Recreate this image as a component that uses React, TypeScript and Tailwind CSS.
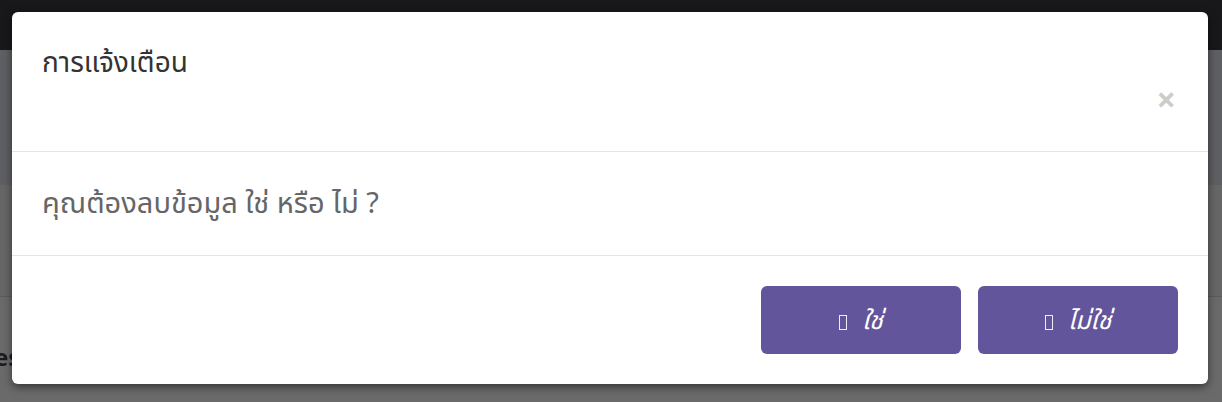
import React from "react";

const thai = { fontFamily: '"Noto Sans", "Noto Sans Thai", "Liberation Sans", sans-serif' };

function Tofu() {
  return <span className="inline-block w-[8px] h-[15px] border border-white/90 align-middle mr-[15px]" />;
}

export default function App() {
  return (
    <div className="relative w-full h-[402px] overflow-hidden bg-[#6b6b6b]" style={thai}>
      {/* page behind the overlay */}
      <div className="h-[50px] bg-[#18181b]" />
      <div className="h-[135px] bg-[#5e5f62]" />
      <div className="h-[112px] bg-[#666666] border-b border-[#5a5a5a]" />
      <div className="h-[105px] bg-[#6a6a6a] pt-[42px]">
        <span className="ml-[-6px] text-[24px] font-bold text-[#1c1c1c]">es</span>
      </div>

      {/* modal */}
      <div className="absolute inset-0 px-[12px] pt-[12px]">
        <div className="w-[1196px] bg-white rounded-[6px] shadow-[0_3px_9px_rgba(0,0,0,0.5)] overflow-hidden">
          <div className="flex justify-between h-[140px] border-b border-[#e5e5e5] pl-[30px] pr-[32px]">
            <h4 className="pt-[29px] text-[28px] leading-[40px] text-[#333]">การแจ้งเตือน</h4>
            <button className="self-start mt-[71px] text-[34px] leading-[32px] font-bold text-[#cccccc]">×</button>
          </div>
          <div className="h-[104px] border-b border-[#e5e5e5] pl-[30px] pt-[30px]">
            <p className="text-[29px] leading-[40px] text-[#666]">คุณต้องลบข้อมูล ใช่ หรือ ไม่ ?</p>
          </div>
          <div className="flex justify-end gap-[17px] pt-[30px] pb-[30px] pr-[30px]">
            <button className="w-[200px] h-[68px] rounded-[6px] bg-[#63559b] text-white italic text-[25px]">
              <Tofu />ใช่
            </button>
            <button className="w-[200px] h-[68px] rounded-[6px] bg-[#63559b] text-white italic text-[25px]">
              <Tofu />ไม่ใช่
            </button>
          </div>
        </div>
      </div>
    </div>
  );
}
